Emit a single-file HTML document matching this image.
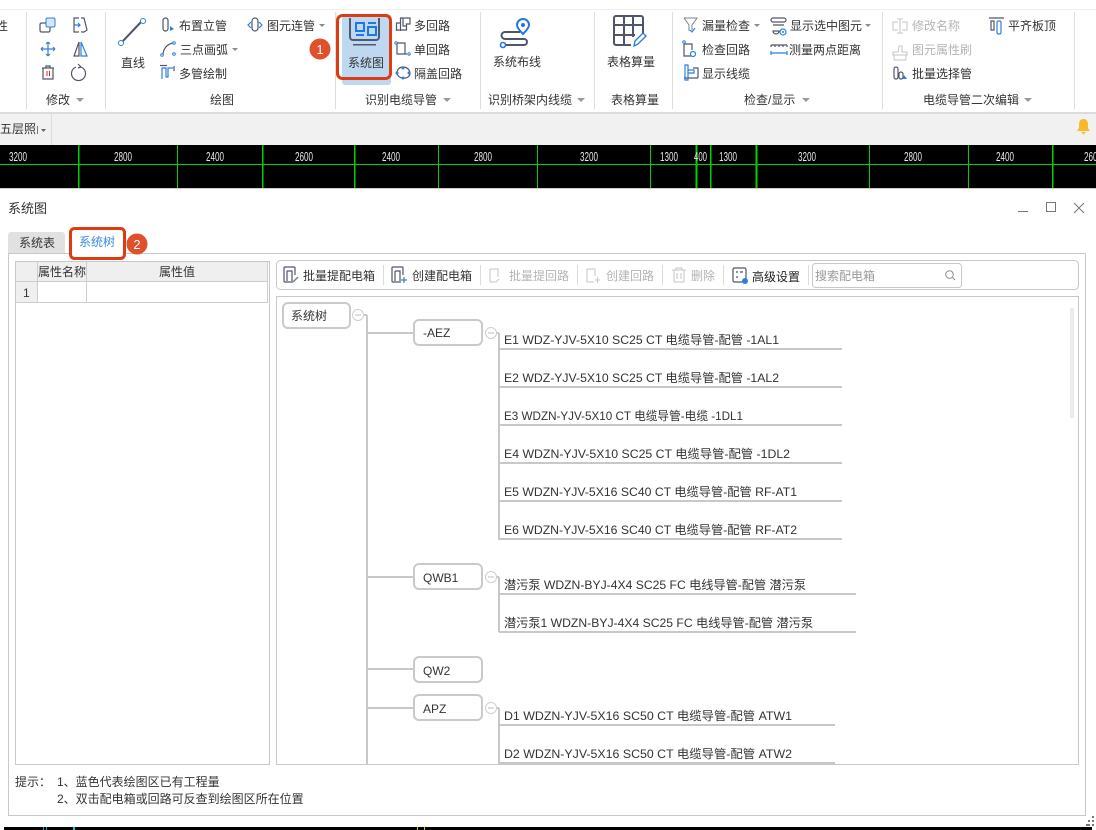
<!DOCTYPE html>
<html><head><meta charset="utf-8">
<style>
html,body{margin:0;padding:0;background:#fff;width:1096px;height:830px;overflow:hidden}
svg{display:block}
text{font-family:"Liberation Sans","Noto Sans CJK SC",sans-serif;font-size:12px;fill:#333}
.g{fill:#b4b4b4}
.k{fill:none;stroke:#50566a;stroke-width:1.2}
.b{fill:none;stroke:#2e7fdc;stroke-width:1.2}
.r{fill:none;stroke:#c8c8c8;stroke-width:2}
.n{fill:#fff;stroke:#cacaca;stroke-width:2}
.c{fill:#fff;stroke:#cfcfcf;stroke-width:1}
.w{fill:#e4e4e4;font-size:13px}
</style></head><body>
<svg width="1096" height="830" viewBox="0 0 1096 830" xmlns="http://www.w3.org/2000/svg">
<rect width="1096" height="830" fill="#fff"/>
<!-- ribbon -->
<rect x="0" y="9" width="1096" height="1" fill="#efefef"/>
<rect x="0" y="113" width="1096" height="32" fill="#f1f1f1"/>
<rect x="0" y="112" width="1096" height="2" fill="#dcdcdc"/>
<g fill="#dedede">
<rect x="26" y="12" width="1" height="97"/><rect x="105" y="12" width="1" height="97"/><rect x="335" y="12" width="1" height="97"/><rect x="480" y="12" width="1" height="97"/><rect x="594" y="12" width="1" height="97"/><rect x="672" y="12" width="1" height="97"/><rect x="882" y="12" width="1" height="97"/><rect x="1074" y="12" width="1" height="97"/>
</g>
<text x="-4" y="30">性</text>
<!-- modify icons -->
<rect x="40" y="23" width="10" height="9" rx="1.5" class="k"/><rect x="46" y="18" width="9" height="9" rx="1.5" fill="#d6e7fb" stroke="#2e7fdc"/>
<path class="k" d="M79 18h-5v14h5M81 18l3 0 3 12-3 2h-3"/><path class="b" d="M74 25h6M78 23l2 2-2 2"/>
<path class="b" d="M41 49h14M48 42v14M41 49l2-2M41 49l2 2M55 49l-2-2M55 49l-2 2M48 42l-2 2M48 42l2 2M48 56l-2-2M48 56l2-2"/>
<path class="k" d="M79 42v14h-5z"/><path class="b" d="M81 42v14h6z"/>
<path class="k" d="M42 68h12M46 68v-2h4v2M43 68v11h10v-11"/><path d="M47 71v5M49.500 71v5" stroke="#d8281c" fill="none"/>
<path class="k" d="M76 67a7 7 0 1 0 5 0"/><path class="k" d="M78 64l3 3-3 1"/>
<text x="46" y="104">修改</text><path d="M76 98h8l-4 4z" fill="#9a9a9a"/>
<!-- draw -->
<path d="M122 42L141 22" stroke="#50566a" stroke-width="2"/><circle cx="121" cy="43" r="2.500" fill="#fff" stroke="#2e7fdc"/><circle cx="143" cy="21" r="2.500" fill="#fff" stroke="#2e7fdc"/>
<text x="121" y="67">直线</text>
<rect x="163" y="18" width="5" height="13" rx="2.500" class="k"/><path d="M170 26l4 3-4 2z" fill="#2e7fdc"/><text x="179" y="30">布置立管</text>
<path class="k" d="M163 55c0-6 4-11 10-12"/><circle cx="162" cy="55" r="1.300" fill="#fff" stroke="#2e7fdc"/><circle cx="174" cy="43" r="1.300" fill="#fff" stroke="#2e7fdc"/><circle cx="174" cy="54" r="1.300" fill="#fff" stroke="#2e7fdc"/><text x="180" y="54">三点画弧</text><path d="M232 48h6l-3 3z" fill="#8a8a8a"/>
<path class="k" d="M160 65.500h7"/><path class="b" d="M162 79v-11h4v9h2v-9h5"/><path class="k" d="M174 66v5"/><text x="179" y="78">多管绘制</text>
<rect x="252" y="18" width="6" height="13" rx="3" class="k"/><path class="b" d="M251 22l-3 3 3 3M259 22l3 3-3 3"/><text x="267" y="30">图元连管</text><path d="M319 24h6l-3 3z" fill="#8a8a8a"/>
<text x="210" y="104">绘图</text>
<!-- system diagram button -->
<rect x="342" y="14" width="49" height="71" rx="3" fill="#bfd8f1"/>
<path d="M350 18v19a3 3 0 0 0 3 3h23a3 3 0 0 0 3-3v-19" fill="none" stroke="#4f5a70" stroke-width="2"/><rect x="353" y="44" width="23" height="1.500" fill="#4f5a70"/>
<path d="M356 23h8v8h-8zM356 35h8M368 23h8M368 27h8v8h-8z" fill="none" stroke="#1e78e0" stroke-width="2"/>
<text x="348" y="67">系统图</text>
<rect x="337.500" y="15.500" width="53" height="63" rx="5" fill="none" stroke="#dd3b12" stroke-width="3"/>
<circle cx="320" cy="49" r="10.500" fill="#e0502b"/><text x="320" y="54" text-anchor="middle" style="font-size:13px;fill:#fff">1</text>
<path class="k" d="M396.500 31v-8h4v-5h9.500v6h-3.500v6h-10zM400.500 23v8M403 18v8h3.500"/><text x="414" y="30">多回路</text>
<path class="k" d="M397 43v11h10"/><circle cx="396" cy="43" r="1.200" fill="#fff" stroke="#2e7fdc"/><path class="k" d="M397 43h8v11"/><circle cx="409" cy="54" r="1.200" fill="#fff" stroke="#2e7fdc"/><text x="414" y="54">单回路</text>
<path class="k" d="M397 73c0-8 12-8 13 0 0 7-12 7-13 0z"/><circle cx="397" cy="73" r="1.500" fill="#2e7fdc"/><circle cx="403" cy="68" r="1.500" fill="#2e7fdc"/><circle cx="403" cy="78" r="1.500" fill="#2e7fdc"/><circle cx="409" cy="73" r="1.500" fill="#2e7fdc"/><text x="414" y="78">隔盖回路</text>
<text x="365" y="104">识别电缆导管</text><path d="M443 98h8l-4 4z" fill="#9a9a9a"/>
<!-- routing -->
<path d="M523 34c-4-4-6-7-6-9a6 6 0 0 1 12 0c0 2-2 5-6 9z" fill="none" stroke="#2277dd" stroke-width="2"/><circle cx="523" cy="25" r="2" fill="#2277dd"/>
<path d="M520 32H505a3.500 3.500 0 0 0 0 7H524a3 3 0 0 1 0 6H506" fill="none" stroke="#50566a" stroke-width="2"/><circle cx="503" cy="45" r="2.500" fill="#fff" stroke="#2277dd" stroke-width="1.600"/>
<text x="493" y="66">系统布线</text>
<text x="488" y="104">识别桥架内线缆</text><path d="M577 98h8l-4 4z" fill="#9a9a9a"/>
<!-- table -->
<path d="M631 45h-15a2 2 0 0 1-2-2v-25a2 2 0 0 1 2-2h25a2 2 0 0 1 2 2v15M614 25h29M614 35h21M624 16v29M633 16v21" fill="none" stroke="#50566a" stroke-width="2"/><path d="M634 46l1-5 8-8 3 3-8 8z" fill="#fff" stroke="#2277dd" stroke-width="1.300"/>
<text x="607" y="66">表格算量</text>
<text x="611" y="104">表格算量</text>
<!-- check -->
<path d="M684 18h13l-5 7v5M684 18l5 7v6" fill="none" stroke="#7c8290"/><path class="b" d="M690 30l2 2 3-4"/><text x="702" y="30">漏量检查</text><path d="M754 24h6l-3 3z" fill="#8a8a8a"/>
<path class="k" d="M773 18h11a2 2 0 0 1 0 4h-11a2 2 0 0 1 0-4zM773 25h11M773 31h6a2 2 0 0 1-6 0z"/><circle cx="783" cy="32" r="3" class="b"/><circle cx="783" cy="32" r="1" fill="#2e7fdc"/><text x="790" y="30">显示选中图元</text><path d="M865 24h6l-3 3z" fill="#8a8a8a"/>
<path class="k" d="M684 44v12h7M684 44h8v6"/><circle cx="684" cy="42" r="1.300" fill="#fff" stroke="#2e7fdc"/><circle cx="693" cy="54" r="2.500" class="b"/><text x="702" y="54">检查回路</text>
<path class="k" d="M771 45h16M771 45v2M787 45v2M775 45v2M779 45v2M783 45v2"/><path class="b" d="M771 53h16M771 51v4M787 51v4"/><text x="789" y="54">测量两点距离</text>
<path class="k" d="M684 78h14M693 68h5v10"/><path class="b" d="M685 65h3v15h-3zM688 70h6v3h-6z"/><text x="702" y="78">显示线缆</text>
<text x="744" y="104">检查/显示</text><path d="M802 98h8l-4 4z" fill="#9a9a9a"/>
<!-- secondary -->
<path d="M900 19v14M897 19h6M897 33h6M898 22h-5v8h5M902 22h5v8h-5" fill="none" stroke="#c6c6c6"/><text x="912" y="30" class="g">修改名称</text>
<path d="M899 46h3v6h5v3h-14v-3h5zM894 55v5h12v-5" fill="none" stroke="#c6c6c6"/><text x="912" y="54" class="g">图元属性刷</text>
<rect x="894" y="67" width="4" height="12" rx="2" class="k"/><rect x="899" y="72" width="4" height="7" rx="2" class="k"/><path d="M904 75l3 4h-4z" fill="#2e7fdc"/><text x="912" y="78">批量选择管</text>
<path class="k" d="M989 18h15M991 21v9h3v-9z"/><rect x="997" y="21" width="4" height="13" rx="1.500" class="b"/><text x="1008" y="30">平齐板顶</text>
<text x="923" y="104">电缆导管二次编辑</text><path d="M1024 98h8l-4 4z" fill="#9a9a9a"/>
<!-- layer tab -->
<rect x="51" y="114" width="1" height="31" fill="#dcdcdc"/>
<text x="0" y="133">五层照</text><rect x="37" y="126" width="1" height="8" fill="#777"/><path d="M41 129h5l-2.500 3z" fill="#666"/>
<path d="M1083.500 119c3.500 0 4.500 2.500 4.500 6v3l2 3h-13l2-3v-3c0-3.500 1-6 4.500-6zM1081 132h5l-2.500 2.500z" fill="#fbb829"/>
<!-- CAD strip -->
<rect x="0" y="145" width="1096" height="43" fill="#000"/>
<rect x="0" y="188" width="1096" height="1" fill="#cfcfcf"/>
<g fill="#00d200">
<rect x="0" y="164" width="1096" height="1"/>
<rect x="78" y="145" width="1.500" height="43"/><rect x="177" y="145" width="1" height="43"/><rect x="262" y="145" width="1.500" height="43"/><rect x="354" y="145" width="1.500" height="43"/><rect x="438" y="145" width="1" height="43"/><rect x="537" y="145" width="1" height="43"/><rect x="650" y="145" width="1" height="43"/><rect x="695.500" y="145" width="2" height="43"/><rect x="710" y="145" width="1.500" height="43"/><rect x="755.500" y="145" width="2" height="43"/><rect x="869" y="145" width="1" height="43"/><rect x="968" y="145" width="1" height="43"/><rect x="1052" y="145" width="1.500" height="43"/>
</g>
<g>
<text x="9" y="161" class="w" textLength="18" lengthAdjust="spacingAndGlyphs">3200</text>
<text x="114" y="161" class="w" textLength="18" lengthAdjust="spacingAndGlyphs">2800</text>
<text x="206" y="161" class="w" textLength="18" lengthAdjust="spacingAndGlyphs">2400</text>
<text x="295" y="161" class="w" textLength="18" lengthAdjust="spacingAndGlyphs">2600</text>
<text x="382" y="161" class="w" textLength="18" lengthAdjust="spacingAndGlyphs">2400</text>
<text x="474" y="161" class="w" textLength="18" lengthAdjust="spacingAndGlyphs">2800</text>
<text x="580" y="161" class="w" textLength="18" lengthAdjust="spacingAndGlyphs">3200</text>
<text x="660" y="161" class="w" textLength="18" lengthAdjust="spacingAndGlyphs">1300</text>
<text x="694" y="161" class="w" textLength="13" lengthAdjust="spacingAndGlyphs">400</text>
<text x="719" y="161" class="w" textLength="18" lengthAdjust="spacingAndGlyphs">1300</text>
<text x="798" y="161" class="w" textLength="18" lengthAdjust="spacingAndGlyphs">3200</text>
<text x="904" y="161" class="w" textLength="18" lengthAdjust="spacingAndGlyphs">2800</text>
<text x="996" y="161" class="w" textLength="18" lengthAdjust="spacingAndGlyphs">2400</text>
<text x="1084" y="161" class="w" textLength="18" lengthAdjust="spacingAndGlyphs">2600</text>
</g>
<!-- dialog header -->
<text x="8" y="213" style="font-size:13px">系统图</text>
<rect x="1018" y="211" width="10" height="1" fill="#777"/>
<rect x="1046.500" y="202.500" width="9" height="9" fill="none" stroke="#777"/>
<path d="M1074 203l10 10M1084 203l-10 10" stroke="#777" fill="none"/>
<!-- outer frame -->
<rect x="8.500" y="253.500" width="1077" height="562" fill="#fff" stroke="#c8c8c8"/>
<path d="M8 253v-18a3 3 0 0 1 3-3h51a3 3 0 0 1 3 3v18z" fill="#e1e1e1"/>
<text x="19" y="247">系统表</text>
<rect x="70.500" y="228.500" width="54" height="30" rx="4" fill="#fff" stroke="#dd3b12" stroke-width="3"/>
<text x="79" y="246" style="fill:#3b8ae6">系统树</text>
<circle cx="137" cy="244" r="10.500" fill="#e0502b"/><text x="137" y="249" text-anchor="middle" style="font-size:13px;fill:#fff">2</text>
<!-- property table -->
<rect x="15.500" y="261.500" width="254" height="503" fill="#fff" stroke="#c8c8c8"/>
<rect x="16" y="262" width="252" height="20" fill="#efefef"/><rect x="16" y="282" width="21" height="20" fill="#efefef"/>
<path d="M15 281.500h253M15 302.500h253M37.500 262v40M86.500 262v40M267.500 262v40" stroke="#cdcdcd" fill="none"/>
<text x="38" y="276">属性名称</text><text x="159" y="276">属性值</text><text x="23" y="297">1</text>
<!-- toolbar -->
<rect x="276.500" y="260.500" width="802" height="29" rx="4" fill="#fff" stroke="#c8c8c8"/>
<g fill="#dcdcdc"><rect x="383" y="265" width="1" height="20"/><rect x="480" y="265" width="1" height="20"/><rect x="577" y="265" width="1" height="20"/><rect x="662" y="265" width="1" height="20"/><rect x="723" y="265" width="1" height="20"/><rect x="808" y="265" width="1" height="20"/></g>
<path class="k" d="M293 282h-8a1 1 0 0 1-1-1v-13a1 1 0 0 1 1-1h9a1 1 0 0 1 1 1v7"/><path class="k" d="M287 271h5v10M287 271v10"/><path d="M293 282l5-5" stroke="#7a8090" stroke-width="1.500"/>
<text x="303" y="280">批量提配电箱</text>
<path class="k" d="M401 282h-8a1 1 0 0 1-1-1v-13a1 1 0 0 1 1-1h9a1 1 0 0 1 1 1v7"/><path class="k" d="M395 271h5v10M395 271v10"/><path class="b" d="M401 280h6M404 277v6"/>
<text x="412" y="280">创建配电箱</text>
<path d="M490 269h8v8M490 269v13h6l3-3" fill="none" stroke="#c6c6c6"/><text x="509" y="280" class="g">批量提回路</text>
<path d="M587 269h8v7M587 269v13h7M595 280h5M597.500 277v6" fill="none" stroke="#c6c6c6"/><text x="606" y="280" class="g">创建回路</text>
<path d="M672 270h14M676 270v-2h6v2M674 270v12h10v-12M677 273v6M681 273v6" fill="none" stroke="#c6c6c6"/><text x="691" y="280" class="g">删除</text>
<rect x="733" y="268" width="13" height="14" rx="1.500" class="k"/><path class="k" d="M736 272h2M740 272h3M736 277h2"/><circle cx="745" cy="281" r="3" fill="#2e7fdc"/>
<text x="752" y="281" style="fill:#222">高级设置</text>
<rect x="812.500" y="263.500" width="149" height="24" rx="3" fill="#fff" stroke="#c8c8c8"/>
<text x="815" y="280" style="fill:#9a9a9a">搜索配电箱</text>
<circle cx="949.500" cy="274.500" r="3.800" fill="none" stroke="#888"/><path d="M952.500 277.500l2.500 2.500" stroke="#888"/>
<!-- tree panel -->
<rect x="276.500" y="296.500" width="802" height="468" fill="#fff" stroke="#c8c8c8"/>
<rect x="1070" y="308" width="4" height="110" fill="#ececec"/>
<path class="r" d="M358 315h9M367 315v450M367 333h47M367 577h47M367 669h47M367 708h47"/>
<path class="r" d="M491 333h8M499 333v207M499 349h343M499 387h343M499 425h343M499 463h343M499 501h343M499 539h343"/>
<path class="r" d="M491 577h8M499 577v55M499 594h357M499 632h357"/>
<path class="r" d="M491 708h8M499 708v57M499 725h336M499 763h336"/>
<rect x="283" y="303" width="67" height="25" rx="5" class="n"/><text x="291" y="320">系统树</text>
<circle cx="358" cy="315" r="5.500" class="c"/><path d="M355 315h6" stroke="#bbb"/>
<rect x="414" y="320" width="68" height="25" rx="5" class="n"/><text x="423" y="337">-AEZ</text>
<circle cx="491" cy="333" r="5.500" class="c"/><path d="M488 333h6" stroke="#bbb"/>
<rect x="414" y="564" width="68" height="25" rx="5" class="n"/><text x="423" y="582">QWB1</text>
<circle cx="491" cy="577" r="5.500" class="c"/><path d="M488 577h6" stroke="#bbb"/>
<rect x="414" y="657" width="68" height="25" rx="5" class="n"/><text x="423" y="675">QW2</text>
<rect x="414" y="695" width="68" height="25" rx="5" class="n"/><text x="423" y="713">APZ</text>
<circle cx="491" cy="708" r="5.500" class="c"/><path d="M488 708h6" stroke="#bbb"/>
<g>
<text x="504" y="344" textLength="275" lengthAdjust="spacingAndGlyphs">E1 WDZ-YJV-5X10 SC25 CT 电缆导管-配管 -1AL1</text>
<text x="504" y="382" textLength="275" lengthAdjust="spacingAndGlyphs">E2 WDZ-YJV-5X10 SC25 CT 电缆导管-配管 -1AL2</text>
<text x="504" y="420" textLength="239" lengthAdjust="spacingAndGlyphs">E3 WDZN-YJV-5X10 CT 电缆导管-电缆 -1DL1</text>
<text x="504" y="458" textLength="286" lengthAdjust="spacingAndGlyphs">E4 WDZN-YJV-5X10 SC25 CT 电缆导管-配管 -1DL2</text>
<text x="504" y="496" textLength="293" lengthAdjust="spacingAndGlyphs">E5 WDZN-YJV-5X16 SC40 CT 电缆导管-配管 RF-AT1</text>
<text x="504" y="534" textLength="293" lengthAdjust="spacingAndGlyphs">E6 WDZN-YJV-5X16 SC40 CT 电缆导管-配管 RF-AT2</text>
<text x="504" y="589" textLength="302" lengthAdjust="spacingAndGlyphs">潜污泵 WDZN-BYJ-4X4 SC25 FC 电线导管-配管 潜污泵</text>
<text x="504" y="627" textLength="309" lengthAdjust="spacingAndGlyphs">潜污泵1 WDZN-BYJ-4X4 SC25 FC 电线导管-配管 潜污泵</text>
<text x="504" y="720" textLength="288" lengthAdjust="spacingAndGlyphs">D1 WDZN-YJV-5X16 SC50 CT 电缆导管-配管 ATW1</text>
<text x="504" y="758" textLength="288" lengthAdjust="spacingAndGlyphs">D2 WDZN-YJV-5X16 SC50 CT 电缆导管-配管 ATW2</text>
</g>
<!-- footer -->
<text x="15" y="786">提示：</text>
<text x="57" y="786">1、蓝色代表绘图区已有工程量</text>
<text x="57" y="803">2、双击配电箱或回路可反查到绘图区所在位置</text>
<g fill="#777"><rect x="1092" y="816" width="2" height="2"/><rect x="1092" y="820" width="2" height="2"/><rect x="1088" y="820" width="2" height="2"/><rect x="1092" y="824" width="2" height="2"/><rect x="1088" y="824" width="2" height="2"/><rect x="1086" y="824" width="2" height="2"/></g>
<rect x="4" y="827" width="1088" height="3" fill="#000"/>
<g><rect x="43" y="827" width="1" height="3" fill="#0aa"/><rect x="46" y="827" width="1" height="3" fill="#0aa"/><rect x="73" y="827" width="2" height="3" fill="#0cc"/><rect x="417" y="827" width="1" height="3" fill="#cc0"/><rect x="424" y="827" width="1" height="3" fill="#cc0"/></g>
</svg>
</body></html>
